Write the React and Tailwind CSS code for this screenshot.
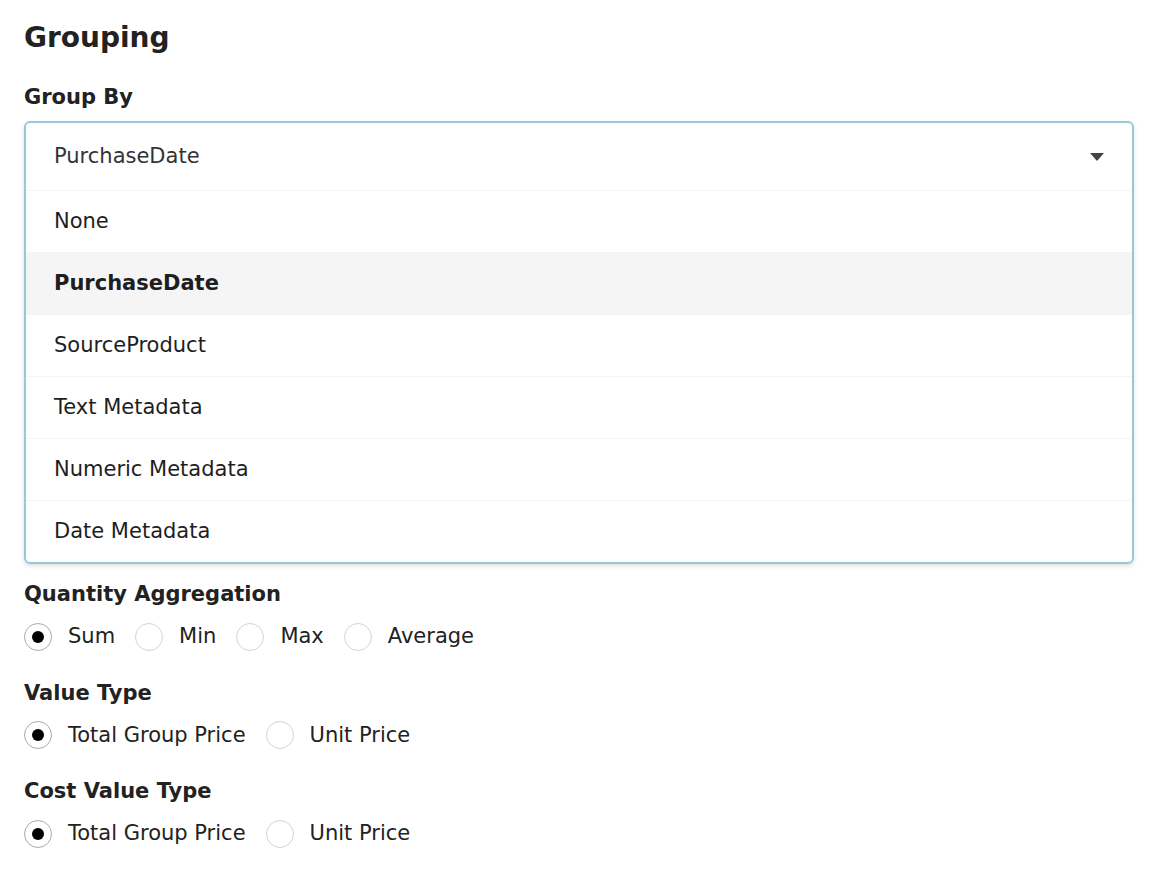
export default function App() {
  const items = ["None", "PurchaseDate", "SourceProduct", "Text Metadata", "Numeric Metadata", "Date Metadata"];
  const Radio = ({ label, checked }) => (
    <div className="flex items-center mr-[20px]">
      <span className={`w-[28px] h-[28px] rounded-full border flex items-center justify-center mr-[16px] ${checked ? "border-[#aaa]" : "border-[#d4d4d5]"}`}>
        {checked && <span className="w-[12px] h-[12px] rounded-full bg-black" />}
      </span>
      <span className="text-[21px] text-[#222]">{label}</span>
    </div>
  );
  const Group = ({ title, opts, mt }) => (
    <div className={mt}>
      <div className="text-[21px] font-bold text-[#222] leading-[28px]">{title}</div>
      <div className="flex mt-[13px]">
        {opts.map((o, i) => <Radio key={o} label={o} checked={i === 0} />)}
      </div>
    </div>
  );
  return (
    <div className="bg-white w-[1162px] h-[876px] px-[24px] pt-[20px]" style={{ fontFamily: "'DejaVu Sans', Verdana, sans-serif" }}>
      <div className="text-[28px] font-bold text-[#222] leading-[36px]">Grouping</div>
      <div className="text-[21px] font-bold text-[#222] mt-[27px] leading-[28px]">Group By</div>
      <div className="mt-[10px] w-[1110px] border-2 border-[#96c8da] rounded-[6px] shadow-[0_2px_4px_rgba(34,36,38,0.15)] overflow-hidden">
        <div className="h-[67px] flex items-center justify-between pl-[28px] pr-[28px]">
          <span className="text-[21px] text-[#333]">PurchaseDate</span>
          <svg width="14" height="8" viewBox="0 0 14 8"><path d="M0 0H14L7 8Z" fill="#444" /></svg>
        </div>
        {items.map((it, i) => (
          <div key={it} className={`h-[62px] flex items-center pl-[28px] border-t border-[#f4f4f4] text-[21px] text-[#1e1e1e] ${i === 1 ? "bg-[#f5f5f5] font-bold" : ""}`}>{it}</div>
        ))}
      </div>
      <Group title="Quantity Aggregation" opts={["Sum", "Min", "Max", "Average"]} mt="mt-[16px]" />
      <Group title="Value Type" opts={["Total Group Price", "Unit Price"]} mt="mt-[26px]" />
      <Group title="Cost Value Type" opts={["Total Group Price", "Unit Price"]} mt="mt-[26px]" />
    </div>
  );
}
